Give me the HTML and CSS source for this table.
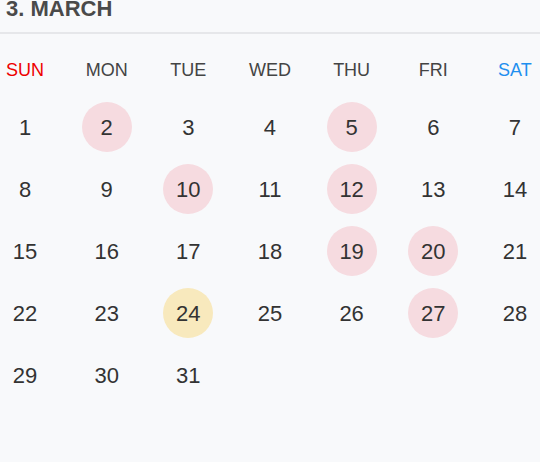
FILE: index.html
```html
<!DOCTYPE html>
<html>
<head>
<meta charset="utf-8">
<link rel="stylesheet" href="styles.css">
</head>
<body>
<div class="month">
  <div class="title">3. MARCH</div>
  <div class="grid weekdays">
    <div class="wd sun">SUN</div>
    <div class="wd">MON</div>
    <div class="wd">TUE</div>
    <div class="wd">WED</div>
    <div class="wd">THU</div>
    <div class="wd">FRI</div>
    <div class="wd sat">SAT</div>
  </div>
  <div class="grid days">
    <div class="day">1</div>
    <div class="day pink">2</div>
    <div class="day">3</div>
    <div class="day">4</div>
    <div class="day pink">5</div>
    <div class="day">6</div>
    <div class="day">7</div>
    <div class="day">8</div>
    <div class="day">9</div>
    <div class="day pink">10</div>
    <div class="day">11</div>
    <div class="day pink">12</div>
    <div class="day">13</div>
    <div class="day">14</div>
    <div class="day">15</div>
    <div class="day">16</div>
    <div class="day">17</div>
    <div class="day">18</div>
    <div class="day pink">19</div>
    <div class="day pink">20</div>
    <div class="day">21</div>
    <div class="day">22</div>
    <div class="day">23</div>
    <div class="day today">24</div>
    <div class="day">25</div>
    <div class="day">26</div>
    <div class="day pink">27</div>
    <div class="day">28</div>
    <div class="day">29</div>
    <div class="day">30</div>
    <div class="day">31</div>
  </div>
</div>
</body>
</html>
```
FILE: styles.css
```css
html, body {
  margin: 0;
  padding: 0;
  background: #f8f9fb;
}
body {
  font-family: "Liberation Sans", Arial, sans-serif;
  color: #333;
}
.month {
  width: 540px;
}
.title {
  font-size: 22px;
  font-weight: bold;
  line-height: 18px;
  color: #4a4a4a;
  padding: 0 0 14px 6px;
  border-bottom: 2px solid #e6e7ea;
}
.grid {
  display: grid;
  grid-template-columns: repeat(7, 50px);
  justify-content: space-between;
}
.weekdays {
  margin-top: 27px;
}
.wd {
  font-size: 18px;
  line-height: 18px;
  text-align: center;
  color: #444;
  white-space: nowrap;
}
.wd.sun { color: #ee0000; }
.wd.sat { color: #1e8fef; }
.days {
  margin-top: 23px;
  row-gap: 12px;
}
.day {
  width: 50px;
  height: 50px;
  box-sizing: border-box;
  padding-top: 2px;
  border-radius: 50%;
  font-size: 22px;
  line-height: 48px;
  text-align: center;
  color: #333;
}
.day.pink { background: #f6dbe0; }
.day.today { background: #f8e9bd; }
```
